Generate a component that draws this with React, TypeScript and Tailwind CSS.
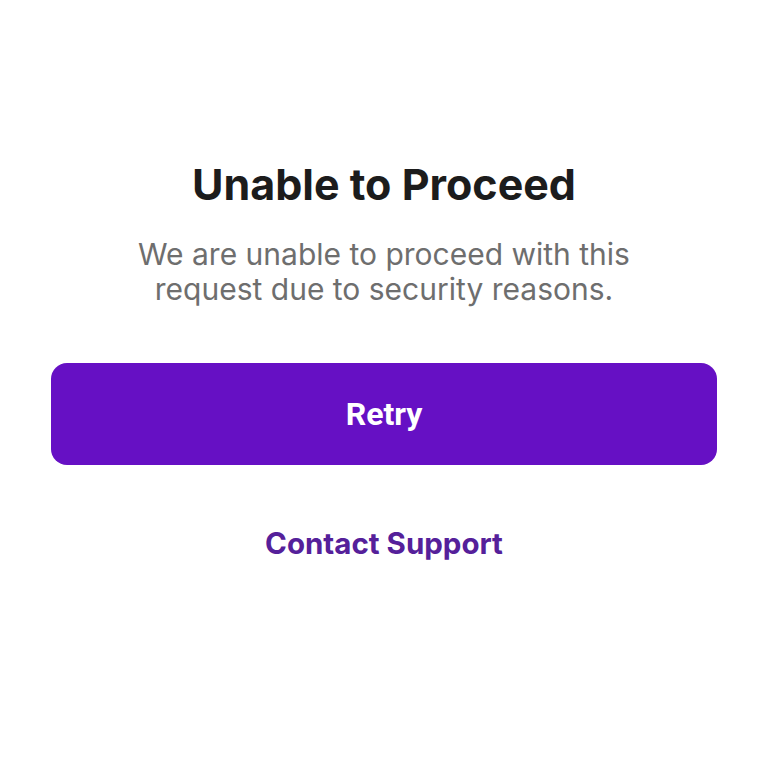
export default function App() {
  return (
    <div className="w-[768px] h-[768px] bg-white flex flex-col items-center px-[51px] pt-[158px]" style={{ fontFamily: "Inter, 'Noto Sans', sans-serif" }}>
      <h1 className="text-[43px] leading-[52px] font-bold text-[#1c1c1c] text-center">Unable to Proceed</h1>
      <p className="mt-[27px] text-[30px] leading-[35px] text-[#6e6e6e] text-center w-[540px]">
        We are unable to proceed with this request due to security reasons.
      </p>
      <button className="mt-[56px] w-full h-[102px] rounded-[16px] bg-[#6610c4] text-white text-[32px] font-bold" style={{ fontFamily: "Roboto, sans-serif" }}>
        Retry
      </button>
      <button className="mt-[58px] text-[29.5px] font-bold text-[#55209a] leading-[40px]">Contact Support</button>
    </div>
  );
}
